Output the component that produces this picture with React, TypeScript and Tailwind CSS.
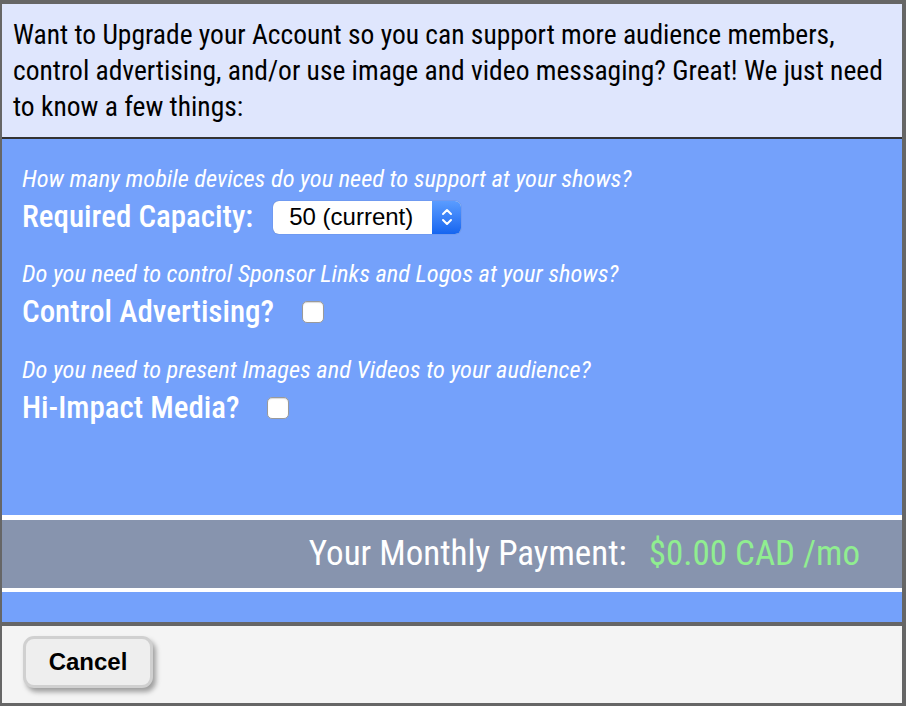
import React from "react";

const cond = { fontFamily: '"Roboto Condensed", Roboto, "Liberation Sans", sans-serif' };
const helv = { fontFamily: '"Liberation Sans", Arial, sans-serif' };

function Checkbox() {
  return (
    <span className="inline-block w-[22px] h-[22px] rounded-[5px] bg-white border border-[#9a9a9a] shadow-[inset_0_1px_1px_rgba(0,0,0,0.15)]" />
  );
}

export default function App() {
  return (
    <div className="w-[906px] h-[706px] bg-[#666666] pt-[4px] pl-[2px] pr-[4px] pb-[3px] flex flex-col">
      <div className="bg-[#dfe6fd] border-b-2 border-[#333333] pl-[11px] pr-[8px] pt-[13px] pb-[12px]" style={cond}>
        <p className="text-[27.5px] leading-[36px] text-black">
          Want to Upgrade your Account so you can support more audience members, control advertising, and/or use image and video messaging? Great! We just need to know a few things:
        </p>
      </div>
      <div className="bg-[#74a1fb] h-[376px] px-[20px] pt-[26px] text-white flex flex-col" style={cond}>
        <div className="italic text-[24.4px] leading-[28px]">How many mobile devices do you need to support at your shows?</div>
        <div className="flex items-center h-[48px]">
          <span className="text-[31px] font-medium">Required Capacity:</span>
          <div className="ml-[20px] flex items-stretch h-[33px] w-[188px] rounded-[6px] overflow-hidden bg-white shadow-[0_0_1px_rgba(0,0,0,0.4)]">
            <span className="flex-1 flex items-center pl-[16px] text-[24px] text-black" style={helv}>50 (current)</span>
            <span className="w-[29px] bg-gradient-to-b from-[#5a9cff] to-[#1565f0] flex items-center justify-center">
              <svg width="14" height="22" viewBox="0 0 14 22" fill="none" stroke="white" strokeWidth="2" strokeLinecap="round" strokeLinejoin="round">
                <path d="M3 8 L7 4 L11 8" />
                <path d="M3 14 L7 18 L11 14" />
              </svg>
            </span>
          </div>
        </div>
        <div className="italic text-[24.4px] leading-[28px] mt-[19px]">Do you need to control Sponsor Links and Logos at your shows?</div>
        <div className="flex items-center h-[48px]">
          <span className="text-[31px] font-medium">Control Advertising?</span>
          <span className="ml-[28px] flex"><Checkbox /></span>
        </div>
        <div className="italic text-[24.4px] leading-[28px] mt-[20px]">Do you need to present Images and Videos to your audience?</div>
        <div className="flex items-center h-[48px]">
          <span className="text-[31px] font-medium">Hi-Impact Media?</span>
          <span className="ml-[27px] flex"><Checkbox /></span>
        </div>
      </div>
      <div className="bg-white h-[5px]" />
      <div className="bg-[#8794ae] h-[68px] flex items-center justify-end pr-[42px]" style={cond}>
        <span className="text-[35px] text-white">Your Monthly Payment:</span>
        <span className="text-[35px] text-[#90ee90] ml-[22px]">$0.00 CAD /mo</span>
      </div>
      <div className="bg-white h-[4px]" />
      <div className="bg-[#74a1fb] h-[30px]" />
      <div className="bg-[#666666] h-[4px]" />
      <div className="bg-[#f4f4f4] flex-1 pl-[21px] pt-[10px]">
        <button className="w-[130px] h-[52px] rounded-[11px] bg-[#eeeeee] border-[3px] border-[#d0d0d0] shadow-[3px_4px_5px_rgba(0,0,0,0.35)] text-[24px] font-bold text-black" style={helv}>
          Cancel
        </button>
      </div>
    </div>
  );
}
